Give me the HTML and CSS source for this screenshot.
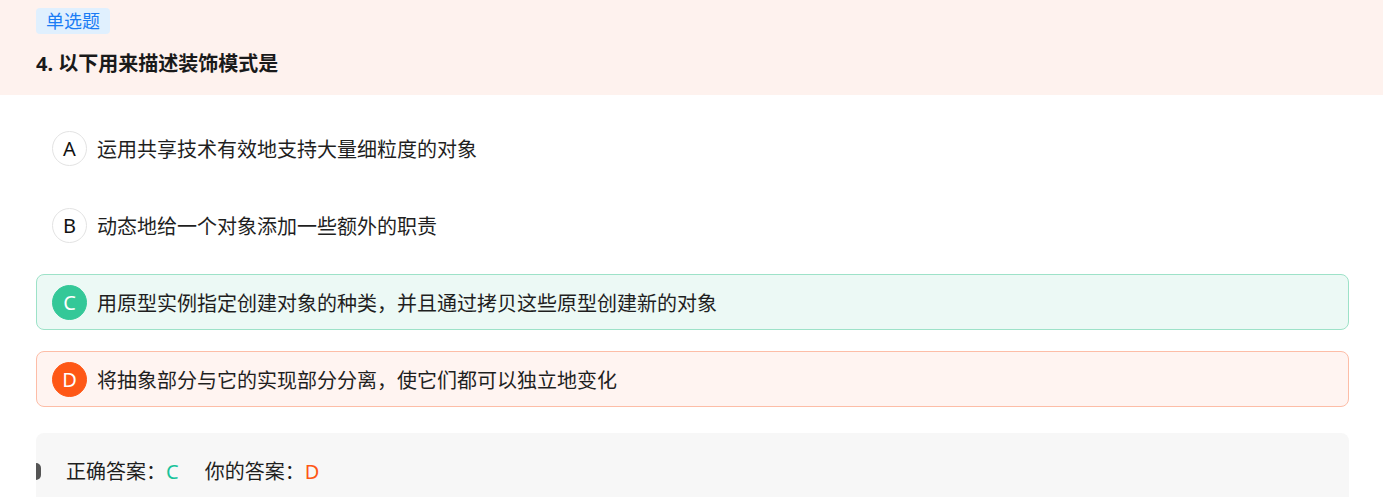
FILE: index.html
```html
<!DOCTYPE html>
<html lang="zh-CN">
<head>
<meta charset="utf-8">
<title>单选题</title>
<link rel="stylesheet" href="styles.css">
</head>
<body>
<div class="question">
  <div class="q-head">
    <span class="tag">单选题</span>
    <div class="title">4. 以下用来描述装饰模式是</div>
  </div>
  <div class="options">
    <div class="option">
      <span class="letter">A</span>
      <span class="opt-text">运用共享技术有效地支持大量细粒度的对象</span>
    </div>
    <div class="option">
      <span class="letter">B</span>
      <span class="opt-text">动态地给一个对象添加一些额外的职责</span>
    </div>
    <div class="option option-right">
      <span class="letter">C</span>
      <span class="opt-text">用原型实例指定创建对象的种类，并且通过拷贝这些原型创建新的对象</span>
    </div>
    <div class="option option-wrong">
      <span class="letter">D</span>
      <span class="opt-text">将抽象部分与它的实现部分分离，使它们都可以独立地变化</span>
    </div>
  </div>
  <div class="answer">
    <span class="marker"></span>
    <span class="ans-item">正确答案：<span class="ans-right">C</span></span>
    <span class="ans-item">你的答案：<span class="ans-wrong">D</span></span>
  </div>
</div>
</body>
</html>
```

FILE: styles.css
```css
html, body {
  margin: 0;
  padding: 0;
  background: #ffffff;
}

body {
  font-family: "Noto Sans", "Noto Sans CJK SC", sans-serif;
  color: #1f1f1f;
}

.q-head {
  background: #fef2ee;
  height: 95px;
  box-sizing: border-box;
  padding: 8px 34px 0 36px;
}

.tag {
  display: inline-block;
  height: 26px;
  line-height: 26px;
  padding: 0 10px;
  font-size: 18px;
  color: #1a7cf5;
  background: #e0f0fe;
  border-radius: 4px;
}

.title {
  margin-top: 16px;
  font-size: 20px;
  line-height: 28px;
  font-weight: 700;
  color: #1a1a1a;
}

.options {
  display: flex;
  flex-direction: column;
  gap: 21px;
  padding: 25px 34px 0 36px;
}

.option {
  display: flex;
  align-items: center;
  gap: 10px;
  height: 56px;
  box-sizing: border-box;
  padding: 0 15px;
  border: 1px solid transparent;
  border-radius: 8px;
  font-size: 20px;
}

.letter {
  flex: none;
  width: 35px;
  height: 35px;
  box-sizing: border-box;
  border: 1px solid #e3e3e3;
  border-radius: 50%;
  display: flex;
  align-items: center;
  justify-content: center;
  font-size: 20px;
  color: #111;
  background: #fff;
}

.opt-text {
  line-height: 28px;
  padding-top: 3px;
  color: #1f1f1f;
}

.option-right {
  background: #ecf9f5;
  border-color: #9de2c8;
}

.option-right .letter {
  background: #34c898;
  border-color: #34c898;
  color: #fff;
}

.option-wrong {
  background: #fff4f1;
  border-color: #fdbda7;
}

.option-wrong .letter {
  background: #fe5716;
  border-color: #fe5716;
  color: #fff;
}

.answer {
  position: relative;
  margin: 26px 34px 0 36px;
  padding: 24px 30px 10px;
  background: #f7f7f7;
  border-radius: 8px 8px 0 0;
  font-size: 20px;
  line-height: 30px;
  display: flex;
  gap: 26px;
  color: #1f1f1f;
}

.marker {
  position: absolute;
  left: 0;
  top: 30px;
  width: 5px;
  height: 17px;
  background: #555;
  border-radius: 0 9px 9px 0 / 0 9px 9px 0;
}

.ans-right {
  color: #19c39a;
}

.ans-wrong {
  color: #fe5716;
}
```
